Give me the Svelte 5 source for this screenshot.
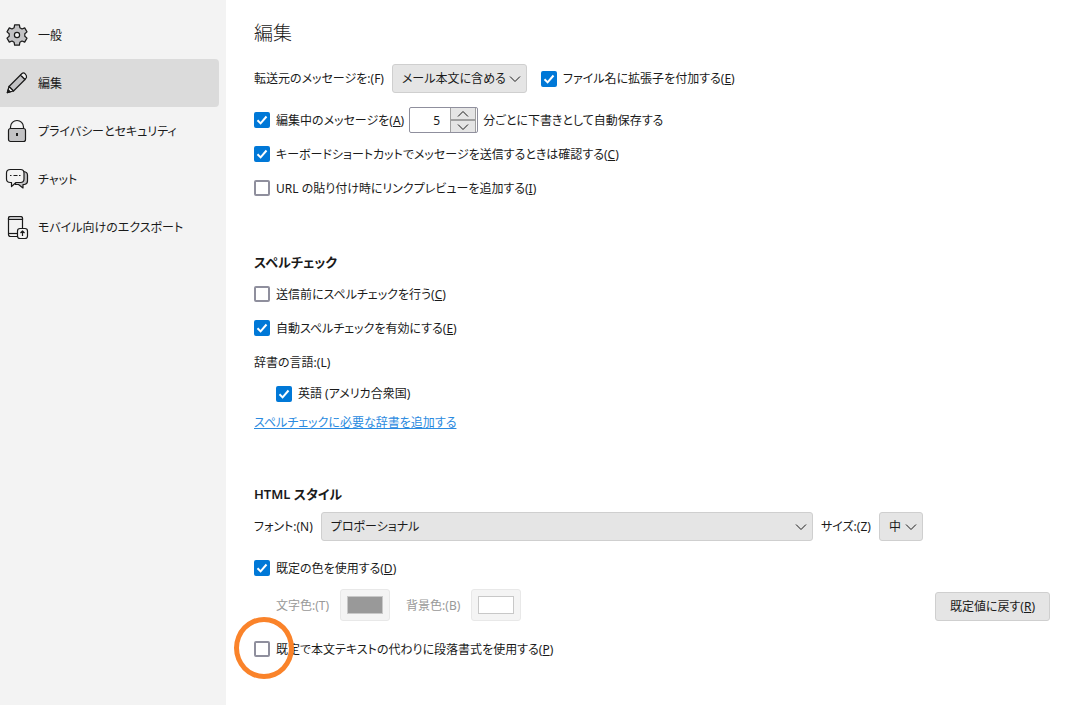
<script lang="ts">
  const categories = [
    { id: 'general', label: '一般' },
    { id: 'compose', label: '編集' },
    { id: 'privacy', label: 'プライバシーとセキュリティ' },
    { id: 'chat', label: 'チャット' },
    { id: 'export', label: 'モバイル向けのエクスポート' },
  ];

  let current = $state('compose');
  let forwardMode = $state('inline');
  let addExtension = $state(true);
  let autoSave = $state(true);
  let autoSaveMinutes = $state(5);
  let confirmShortcut = $state(true);
  let linkPreview = $state(false);
  let spellBeforeSend = $state(false);
  let inlineSpell = $state(true);
  let dictEnglish = $state(true);
  let font = $state('proportional');
  let size = $state('medium');
  let defaultColors = $state(true);
  let textColor = $state('#999999');
  let backgroundColor = $state('#ffffff');
  let paragraphFormat = $state(false);

  function stepMinutes(delta: number) {
    autoSaveMinutes = Math.max(1, autoSaveMinutes + delta);
  }

  function restoreDefaults() {
    font = 'proportional';
    size = 'medium';
    defaultColors = true;
    paragraphFormat = false;
  }
</script>

{#snippet chevron()}
  <svg class="chevron" viewBox="0 0 12 12" aria-hidden="true">
    <path d="M1 3.5 6 8.5 11 3.5" />
  </svg>
{/snippet}

{#snippet tick()}
  <svg class="tick" viewBox="0 0 16 16" aria-hidden="true">
    <path d="M3.5 8.3 6.6 11.4 12.5 4.5" />
  </svg>
{/snippet}

<div class="preferences">
  <nav class="sidebar">
    {#each categories as category (category.id)}
      <button
        class="category"
        class:selected={current === category.id}
        onclick={() => (current = category.id)}
      >
        <svg class="category-icon" viewBox="0 0 22 22" aria-hidden="true">
          {#if category.id === 'general'}
            <path
              class="shade"
              d="M8.6.9h4.8l.5 2.9 2.1 1.2 2.7-1.1 2.3 4-2.2 1.900v2.400l2.200 1.900-2.300 4-2.700-1.100-2.100 1.200-.5 2.900H8.600l-.5-2.900L6 17l-2.700 1.100-2.300-4 2.200-1.900V9.800L1 7.900l2.300-4L6 5l2.100-1.200z"
            />
            <circle class="light" cx="11" cy="11" r="2.6" />
          {:else if category.id === 'compose'}
            <path class="shade" d="M3 14.5 14.5 3 19 7.5 7.5 19z" />
            <path class="light" d="M14.5 3l1.5-1.5q1.5-1.2 3.2.4t1.3 3.6L19 7.5z" />
            <path class="light" d="M3 14.5 1.3 20.7 7.5 19z" />
            <path class="solid" d="M1.3 20.7l.9-3 2.1 2.1z" />
          {:else if category.id === 'privacy'}
            <path d="M4.5 8.5V7a6.5 6.5 0 0 1 13 0v1.5" />
            <rect class="shade" x="2.5" y="8.5" width="17" height="13" rx="2" />
            <path class="keyhole" d="M11 13v3" />
          {:else if category.id === 'chat'}
            <path
              class="shade"
              d="M17.5 3.5q4 .5 4 3.5v6q0 3-3 3.5h-1.5v3.5l-4.5-3.5h-3V12z"
            />
            <path
              class="light"
              d="M4.5 1.5h10q3.5 0 3.5 3.5v6q0 3.5-3.5 3.5H10l-4.5 4v-4h-1Q.5 14.5.5 11V5Q.5 1.5 4.5 1.5z"
            />
            <path d="M4 7.5h1.5M7.5 7.5h4M13 7.5h1.5" />
          {:else}
            <path class="light" d="M2.5 2.5q0-2 2-2h10q2 0 2 2v18h-12q-2 0-2-2z" />
            <path class="shade" d="M2.5 3.5v-1q0-2 2-2h10q2 0 2 2v1z" />
            <path d="M2.5 17.5h9" />
            <rect class="light" x="11.5" y="12.5" width="10" height="10" rx="2.5" />
            <path d="M16.5 20v-5M14.5 17l2-2 2 2" />
          {/if}
        </svg>
        {category.label}
      </button>
    {/each}
  </nav>

  <main class="pane">
    <h1>編集</h1>

    <section>
      <div class="row forward">
        <label for="forward">転送元のメッセージを:(F)</label>
        <span class="menulist">
          <select id="forward" bind:value={forwardMode}>
            <option value="inline">メール本文に含める</option>
            <option value="attach">添付する</option>
          </select>
          {@render chevron()}
        </span>
        <label class="check extension">
          <span class="box"><input type="checkbox" bind:checked={addExtension} />{@render tick()}</span>
          <span>ファイル名に拡張子を付加する(<u>E</u>)</span>
        </label>
      </div>
      <div class="row autosave">
        <label class="check">
          <span class="box"><input type="checkbox" bind:checked={autoSave} />{@render tick()}</span>
          <span>編集中のメッセージを(<u>A</u>)</span>
        </label>
        <span class="number">
          <input id="minutes" type="number" min="1" bind:value={autoSaveMinutes} />
          <span class="spinner">
            <button aria-label="増やす" onclick={() => stepMinutes(1)}>
              <svg viewBox="0 0 12 8" aria-hidden="true"><path d="M1 6.5 6 1.5 11 6.5" /></svg>
            </button>
            <button aria-label="減らす" onclick={() => stepMinutes(-1)}>
              <svg viewBox="0 0 12 8" aria-hidden="true"><path d="M1 1.5 6 6.5 11 1.5" /></svg>
            </button>
          </span>
        </span>
        <label for="minutes">分ごとに下書きとして自動保存する</label>
      </div>
      <div class="row">
        <label class="check">
          <span class="box"><input type="checkbox" bind:checked={confirmShortcut} />{@render tick()}</span>
          <span>キーボードショートカットでメッセージを送信するときは確認する(<u>C</u>)</span>
        </label>
      </div>
      <div class="row">
        <label class="check">
          <span class="box"><input type="checkbox" bind:checked={linkPreview} />{@render tick()}</span>
          <span>URL の貼り付け時にリンクプレビューを追加する(<u>I</u>)</span>
        </label>
      </div>
    </section>

    <section>
      <h2>スペルチェック</h2>
      <div class="row">
        <label class="check">
          <span class="box"><input type="checkbox" bind:checked={spellBeforeSend} />{@render tick()}</span>
          <span>送信前にスペルチェックを行う(<u>C</u>)</span>
        </label>
      </div>
      <div class="row">
        <label class="check">
          <span class="box"><input type="checkbox" bind:checked={inlineSpell} />{@render tick()}</span>
          <span>自動スペルチェックを有効にする(<u>E</u>)</span>
        </label>
      </div>
      <div class="row">
        <span id="dictionaries">辞書の言語:(L)</span>
      </div>
      <div class="row short indent" role="group" aria-labelledby="dictionaries">
        <label class="check">
          <span class="box"><input type="checkbox" bind:checked={dictEnglish} />{@render tick()}</span>
          <span>英語 (アメリカ合衆国)</span>
        </label>
      </div>
      <div class="row short">
        <a href="#dictionaries">スペルチェックに必要な辞書を追加する</a>
      </div>
    </section>

    <section>
      <h2>HTML スタイル</h2>
      <div class="html-style">
        <div class="settings">
          <div class="row font">
            <label for="font">フォント:(N)</label>
            <span class="menulist wide">
              <select id="font" bind:value={font}>
                <option value="proportional">プロポーショナル</option>
                <option value="monospace">固定幅</option>
              </select>
              {@render chevron()}
            </span>
            <label for="size">サイズ:(Z)</label>
            <span class="menulist">
              <select id="size" bind:value={size}>
                <option value="small">小</option>
                <option value="medium">中</option>
                <option value="large">大</option>
              </select>
              {@render chevron()}
            </span>
          </div>
          <div class="row">
            <label class="check">
              <span class="box"><input type="checkbox" bind:checked={defaultColors} />{@render tick()}</span>
              <span>既定の色を使用する(<u>D</u>)</span>
            </label>
          </div>
          <div class="row colors indent" class:disabled={defaultColors}>
            <label for="text-color">文字色:(T)</label>
            <input id="text-color" type="color" disabled={defaultColors} bind:value={textColor} />
            <label class="second" for="background-color">背景色:(B)</label>
            <input id="background-color" type="color" disabled={defaultColors} bind:value={backgroundColor} />
          </div>
        </div>
        <button class="restore" onclick={restoreDefaults}>既定値に戻す(<u>R</u>)</button>
      </div>
      <div class="row paragraph">
        <label class="check">
          <span class="box">
            <input type="checkbox" bind:checked={paragraphFormat} />{@render tick()}
            <span class="marker"></span>
          </span>
          <span>既定で本文テキストの代わりに段落書式を使用する(<u>P</u>)</span>
        </label>
      </div>
    </section>
  </main>
</div>

<style>
  :global(body) {
    background: #fff;
    color: #1a1a1a;
    font-family: 'Noto Sans', 'Noto Sans CJK JP', sans-serif;
    font-size: 12px;
    line-height: 21px;
    font-feature-settings: 'palt';
  }

  .preferences {
    display: flex;
    min-height: 100vh;
  }

  button,
  input,
  select {
    margin: 0;
    box-sizing: border-box;
    color: inherit;
    font: inherit;
    font-feature-settings: inherit;
  }

  svg {
    fill: none;
    stroke: #1a1a1a;
  }

  .sidebar {
    flex: 0 0 226px;
    box-sizing: border-box;
    background: #f3f3f3;
    padding: 11px 7px 0 0;
  }

  .category {
    display: flex;
    align-items: center;
    gap: 10px;
    border: none;
    border-radius: 0 4px 4px 0;
    background: none;
    padding: 0 6px;
    width: 100%;
    height: 48px;
    text-align: left;
    white-space: nowrap;
  }

  .selected {
    background: #dbdbdb;
  }

  .category-icon {
    flex: none;
    overflow: visible;
    width: 22px;
    height: 22px;
    stroke-width: 1.2;
    stroke-linejoin: round;
  }

  .shade {
    fill: #c2c2c4;
  }

  .light {
    fill: #f3f3f3;
  }

  .solid {
    fill: #1a1a1a;
  }

  .keyhole {
    stroke-width: 2;
  }

  .pane {
    flex: 1;
    min-width: 0;
    padding: 18px 17px 20px 28px;
    white-space: nowrap;
  }

  h1 {
    margin: 0 0 16px;
    font-weight: 300;
    font-size: 19px;
    line-height: 30px;
  }

  h2 {
    margin: 0 0 3px;
    font-weight: 600;
    font-size: 13px;
    line-height: 24px;
  }

  section + section {
    margin-top: 45px;
  }

  .row {
    display: flex;
    align-items: center;
    gap: 8px;
    height: 34px;
  }

  .short {
    height: 29px;
  }

  .forward {
    margin-bottom: 10px;
    height: 29px;
  }

  .extension {
    margin-left: 6px;
  }

  .autosave {
    gap: 5px;
  }

  .indent {
    margin-left: 22px;
  }

  .check {
    display: flex;
    align-items: center;
    gap: 6px;
  }

  .box {
    display: grid;
    position: relative;
    width: 16px;
    height: 16px;
  }

  .box input {
    grid-area: 1 / 1;
    appearance: none;
    border: 2px solid #8f8f9d;
    border-radius: 2px;
    background: #fff;
    width: 16px;
    height: 16px;
  }

  .box input:checked {
    border-color: #0078d7;
    background: #0078d7;
  }

  .tick {
    grid-area: 1 / 1;
    visibility: hidden;
    z-index: 1;
    stroke: #fff;
    stroke-width: 2;
    pointer-events: none;
  }

  input:checked + .tick {
    visibility: visible;
  }

  .menulist {
    display: grid;
    align-items: center;
  }

  .wide {
    flex: 1;
  }

  select {
    grid-area: 1 / 1;
    appearance: none;
    border: 1px solid #cfcfcf;
    border-radius: 3px;
    background: #e5e5e5;
    padding: 0 20px 0 9px;
    width: 100%;
    height: 29px;
  }

  .chevron {
    grid-area: 1 / 1;
    justify-self: end;
    margin-right: 6px;
    width: 12px;
    height: 12px;
    pointer-events: none;
  }

  .number {
    display: flex;
    box-sizing: border-box;
    border: 1px solid #8f8f9d;
    border-radius: 2px;
    padding-right: 1px;
    width: 69px;
    height: 26px;
  }

  .number input {
    appearance: textfield;
    border: none;
    background: none;
    padding: 0 10px 0 0;
    width: 40px;
    text-align: right;
  }

  .number input::-webkit-inner-spin-button {
    display: none;
  }

  .spinner {
    display: grid;
    flex: 1;
    grid-template-rows: 1fr 1fr;
  }

  .spinner button {
    display: grid;
    place-items: center;
    border: 1px solid #a0a0a0;
    border-width: 0 1px 1px;
    background: #e5e5e5;
    padding: 0;
  }

  .spinner button + button {
    border-width: 1px 1px 0;
  }

  .spinner svg {
    width: 12px;
    height: 8px;
  }

  a {
    color: #2a8ae0;
  }

  .html-style {
    display: grid;
    grid-template-columns: 1fr auto;
    align-items: end;
    gap: 12px;
  }

  .font {
    margin: 3px 0 10px;
    height: 29px;
  }

  .colors {
    gap: 11px;
    margin-top: 4px;
    height: 32px;
  }

  .disabled {
    color: #999;
  }

  .second {
    margin-left: 5px;
  }

  input[type='color'] {
    appearance: none;
    border: 1px solid #e8e8e8;
    border-radius: 3px;
    background: #f4f4f4;
    padding: 6px;
    width: 50px;
    height: 32px;
  }

  input::-webkit-color-swatch-wrapper {
    padding: 0;
  }

  input::-webkit-color-swatch {
    border: 1px solid #c8c8c8;
    border-radius: 0;
  }

  .restore {
    border: 1px solid #cfcfcf;
    border-radius: 3px;
    background: #e5e5e5;
    padding: 0 14px;
    height: 29px;
  }

  .paragraph {
    margin-top: 11px;
  }

  /* highlight ring over the last checkbox */
  .marker {
    position: absolute;
    top: -24px;
    left: -20px;
    box-sizing: border-box;
    border: 5px solid #fa832a;
    border-radius: 50%;
    width: 60px;
    height: 62px;
    pointer-events: none;
  }
</style>
